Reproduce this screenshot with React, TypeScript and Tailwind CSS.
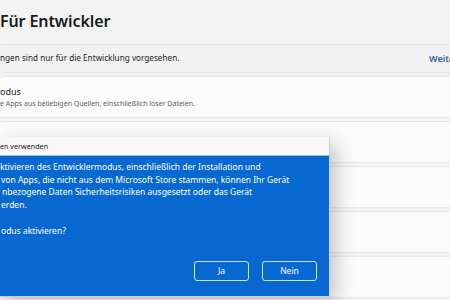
import React from "react";

export default function App() {
  const font = { fontFamily: '"Noto Sans", "Open Sans", sans-serif' };
  return (
    <div
      className="relative w-[450px] h-[300px] overflow-hidden bg-[#f3f3f3] text-[#1b1b1b]"
      style={font}
    >
      <div className="pt-[9px] pl-0 h-[44px]">
        <h1 className="text-[16px] leading-[24px] font-semibold tracking-[-0.1px] text-[#1a1a1a]">
          Für Entwickler
        </h1>
      </div>
      <div className="flex flex-col gap-[3px] -mr-[30px]">
        <div className="h-[29px] flex items-center justify-between bg-[#f2f2f2] border border-[#e3e3e3] border-l-0 rounded-[3px]">
          <span className="text-[8.2px] text-[#222]">ngen sind nur für die Entwicklung vorgesehen.</span>
          <span className="text-[9px] font-semibold text-[#2c5ea6] w-[50px]">Weitere</span>
        </div>
        <div className="h-[42px] flex flex-col justify-center pt-[1px] bg-[#fbfbfb] border border-[#e6e6e6] border-l-0 rounded-[3px]">
          <span className="text-[9px] leading-[12px] text-[#1e1e1e]">odus</span>
          <span className="text-[7px] leading-[11px] text-[#5f5f5f]">e Apps aus beliebigen Quellen, einschließlich loser Dateien.</span>
        </div>
        <div className="h-[42px] bg-[#fbfbfb] border border-[#e6e6e6] border-l-0 rounded-[3px] pt-[8px]">
          <span className="text-[9px] leading-[12px] text-[#1e1e1e]">n</span>
        </div>
        <div className="h-[42px] bg-[#fbfbfb] border border-[#e6e6e6] border-l-0 rounded-[3px]" />
        <div className="h-[42px] bg-[#fbfbfb] border border-[#e6e6e6] border-l-0 rounded-[3px]" />
        <div className="h-[42px] bg-[#fbfbfb] border border-[#e6e6e6] border-l-0 rounded-[3px]" />
      </div>

      <div className="absolute left-0 top-[137px] w-[330px] shadow-[6px_6px_18px_rgba(0,0,0,0.22)] border-r border-b border-[#cfcfcf]">
        <div className="h-[19px] bg-[#f8f8f8] flex items-center border-b border-[#9cc6ee]">
          <span className="text-[7.2px] text-[#222]">en verwenden</span>
        </div>
        <div className="h-[140px] bg-[#0868d2] text-white flex flex-col pr-[12px]">
          <div className="pt-[5px] text-[8.5px] leading-[12.7px]">
            <div>ktivieren des Entwicklermodus, einschließlich der Installation und</div>
            <div className="pl-[1px]">von Apps, die nicht aus dem Microsoft Store stammen, können Ihr Gerät</div>
            <div className="pl-[2px]">nbezogene Daten Sicherheitsrisiken ausgesetzt oder das Gerät</div>
            <div className="pl-[1px]">erden.</div>
            <div className="h-[12.7px]" />
            <div className="pl-[1px]">odus aktivieren?</div>
          </div>
          <div className="flex justify-end gap-[13px] mt-auto mb-[15px]">
            <button className="w-[55px] h-[20px] rounded-[3px] border border-[#cfe4fa] text-[8.5px] text-white">
              Ja
            </button>
            <button className="w-[55px] h-[20px] rounded-[3px] border border-[#cfe4fa] text-[8.5px] text-white">
              Nein
            </button>
          </div>
        </div>
      </div>
    </div>
  );
}
